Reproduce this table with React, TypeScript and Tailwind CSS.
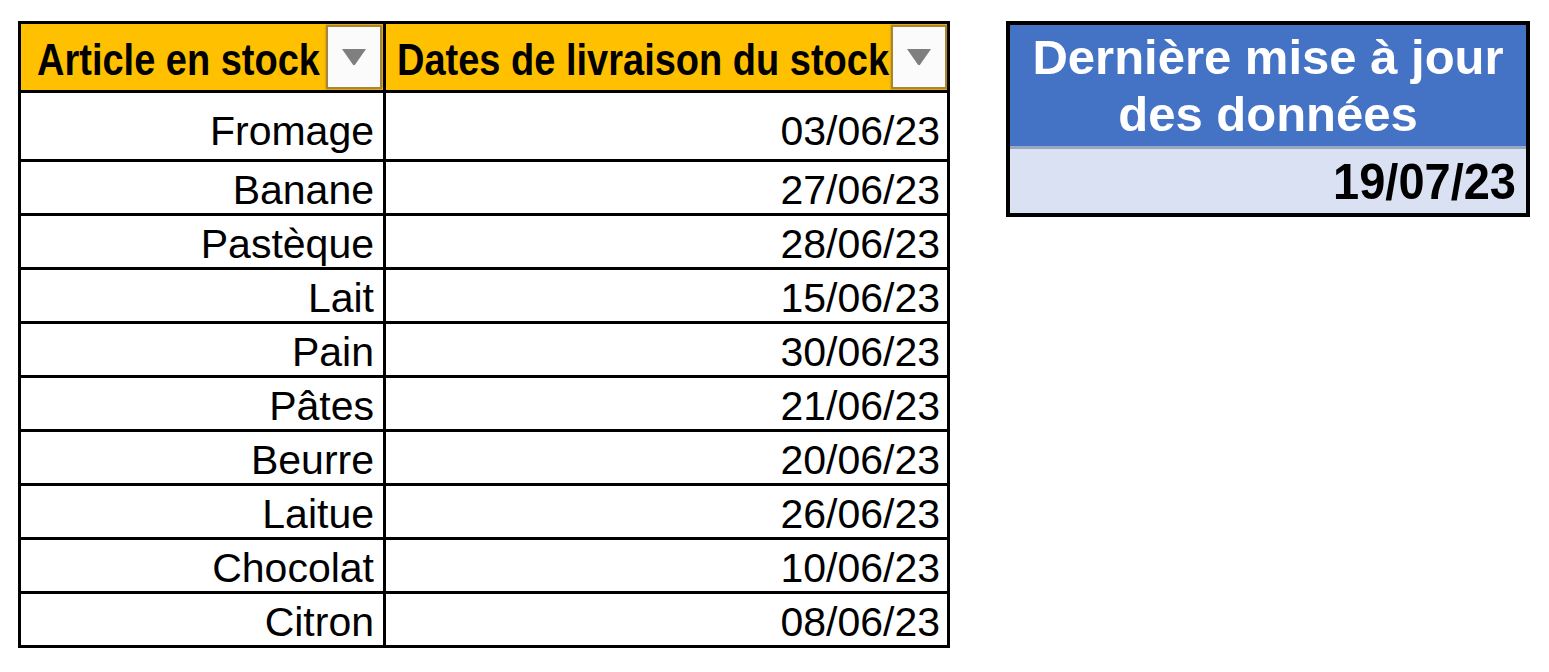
const rows: [string, string][] = [
  ['Fromage', '03/06/23'],
  ['Banane', '27/06/23'],
  ['Pastèque', '28/06/23'],
  ['Lait', '15/06/23'],
  ['Pain', '30/06/23'],
  ['Pâtes', '21/06/23'],
  ['Beurre', '20/06/23'],
  ['Laitue', '26/06/23'],
  ['Chocolat', '10/06/23'],
  ['Citron', '08/06/23'],
]

function FilterButton() {
  return (
    <div className="shrink-0 w-[56px] h-[64px] bg-[#fbfbfb] border-2 border-[#a8843a] shadow-[0_0_2px_rgba(120,90,30,0.6)] flex items-center justify-center">
      <svg width="26" height="18" viewBox="0 0 26 18">
        <path d="M1 1 H25 L14.2 16.4 Q13 18 11.8 16.4 Z" fill="#7f7f7f" />
      </svg>
    </div>
  )
}

export default function App() {
  return (
    <div className="w-[1549px] h-[672px] bg-white flex items-start font-['Liberation_Sans',Arial,sans-serif] text-black">
      <div className="mt-[21px] ml-[18px] w-[932px] border-[3px] border-black">
        <div className="grid grid-cols-[362px_564px] h-[66px] bg-[#ffc000]">
          <div className="flex items-center justify-between pl-[16px] pr-[1px]">
            <span className="inline-block font-bold text-[38px] leading-none scale-y-[1.17] translate-y-[3px]">Article en stock</span>
            <FilterButton />
          </div>
          <div className="flex items-center justify-between border-l-[3px] border-black pl-[11px]">
            <span className="inline-block font-bold text-[38px] leading-none scale-y-[1.17] translate-y-[3px]">Dates de livraison du stock</span>
            <FilterButton />
          </div>
        </div>
        {rows.map(([item, date], i) => (
          <div
            key={item}
            className={`grid grid-cols-[362px_564px] border-t-[3px] border-black text-[41px] leading-none ${i === 0 ? 'h-[69px]' : 'h-[54px]'}`}
          >
            <div className={`flex items-end justify-end pr-[9px] ${i === 0 ? 'pb-[7px]' : 'pb-[2px]'}`}>{item}</div>
            <div className={`flex items-end justify-end border-l-[3px] border-black pr-[7px] ${i === 0 ? 'pb-[7px]' : 'pb-[2px]'}`}>{date}</div>
          </div>
        ))}
      </div>

      <div className="mt-[21px] ml-[56px] w-[524px] border-[4px] border-black">
        <div className="h-[121px] bg-[#4472c4] text-white font-bold text-[49px] leading-[57px] text-center flex flex-col justify-center pt-[1px]">
          <div>Dernière mise à jour</div>
          <div>des données</div>
        </div>
        <div className="h-[67px] bg-[#d9e1f2] border-t-[3px] border-[#9aa7bf] flex items-center justify-end pr-[10px] font-bold text-[47px] leading-none">
          <span className="inline-block scale-y-[1.05]">19/07/23</span>
        </div>
      </div>
    </div>
  )
}
